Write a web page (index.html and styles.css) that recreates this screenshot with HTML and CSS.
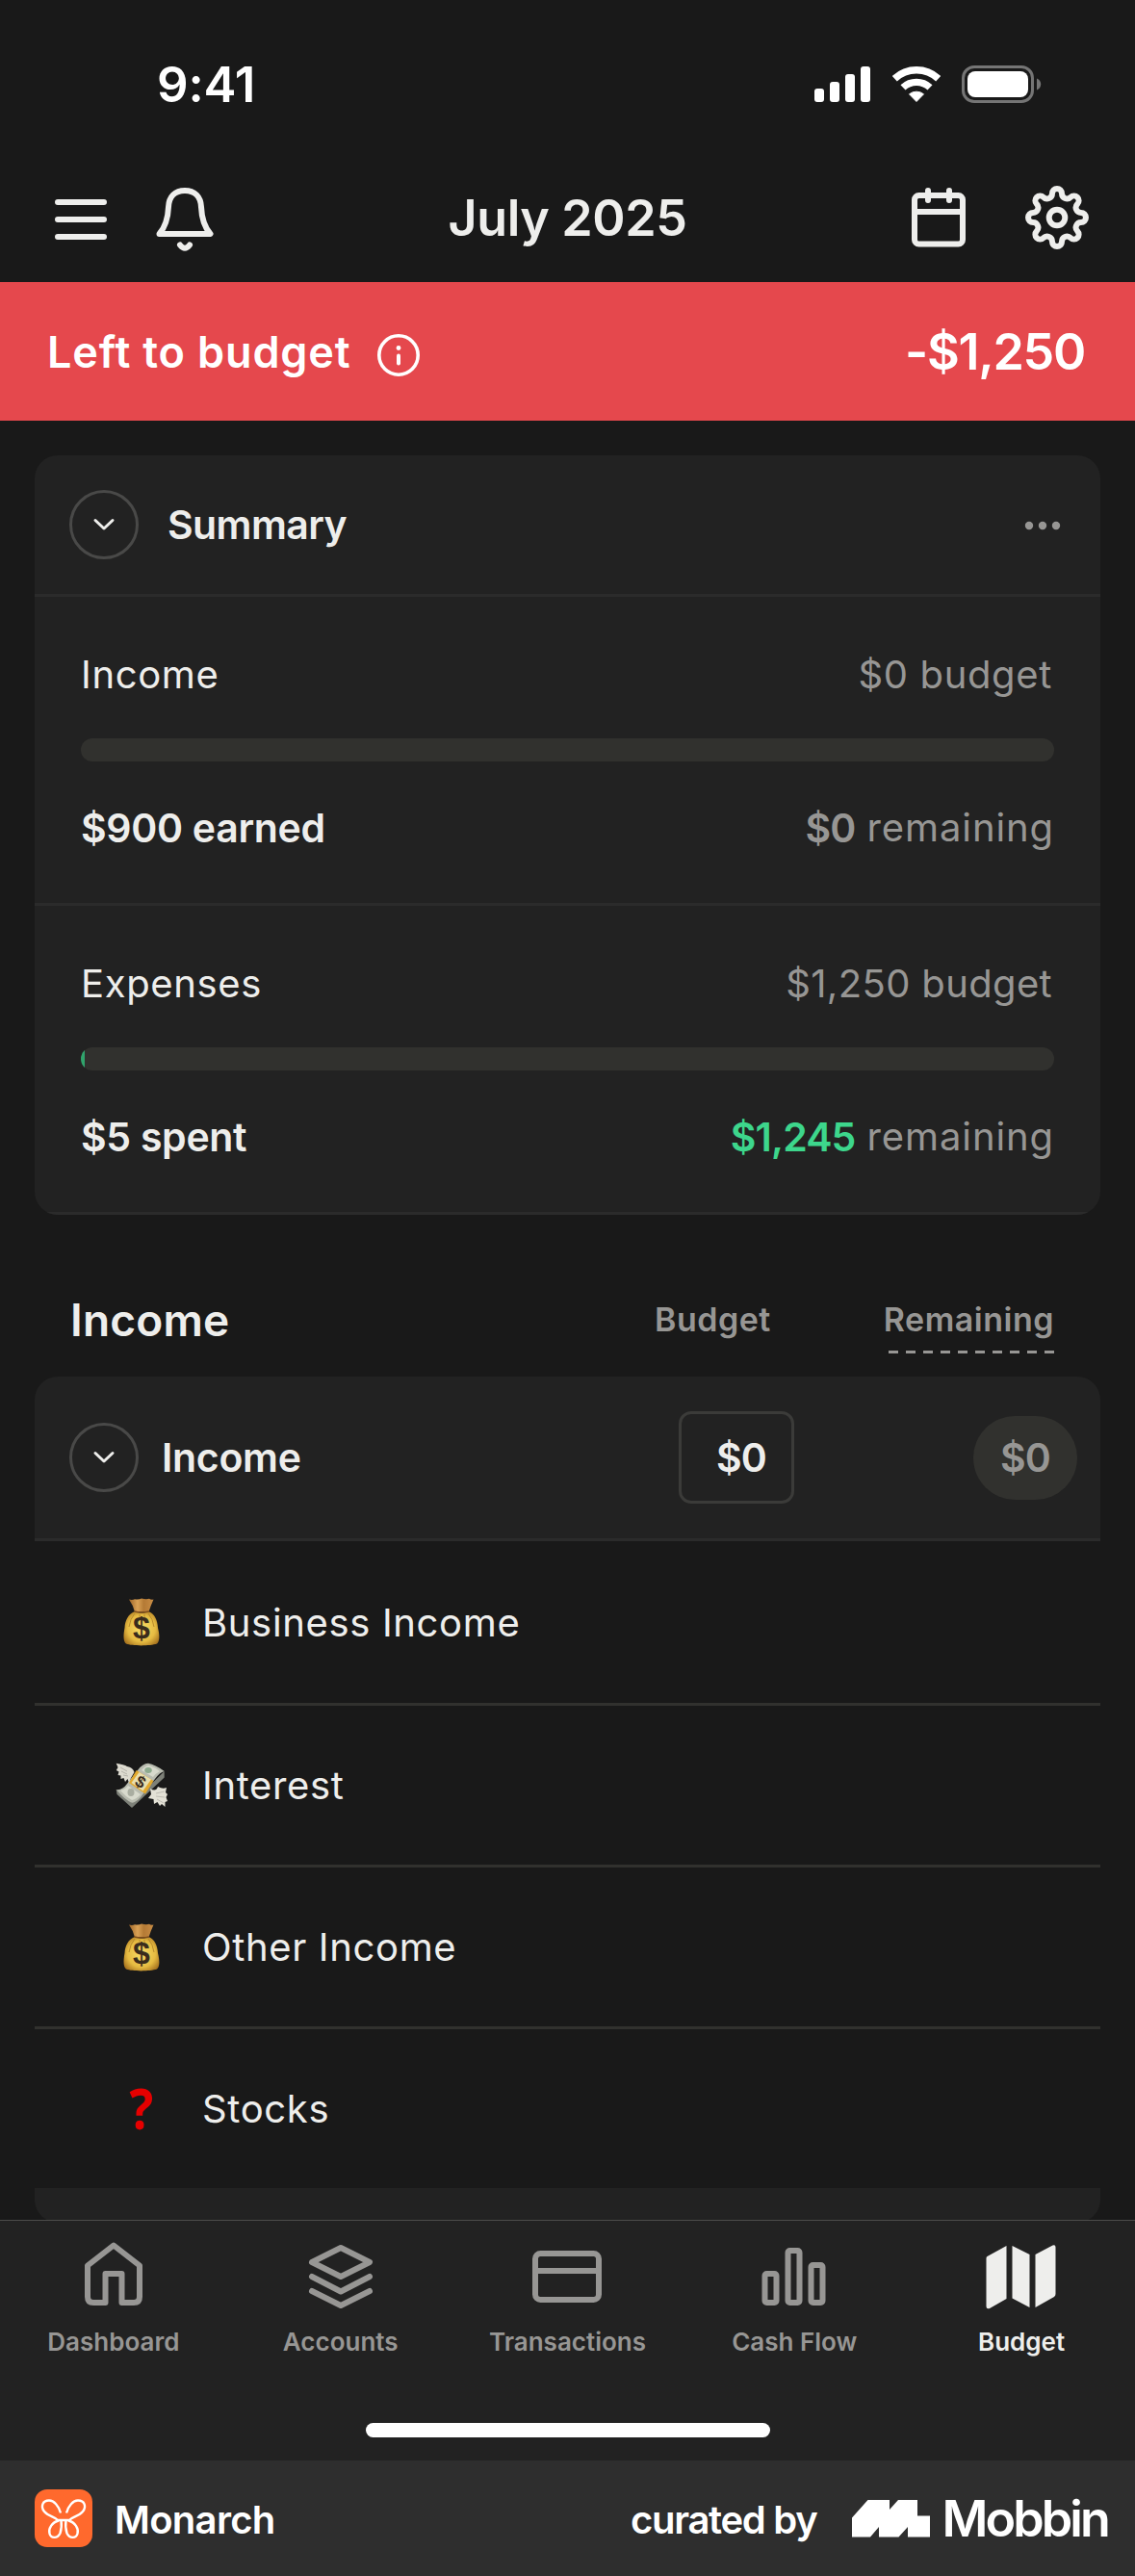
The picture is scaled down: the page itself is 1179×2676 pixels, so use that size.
FILE: index.html
```html
<!DOCTYPE html>
<html lang="en">
<head>
<meta charset="utf-8">
<title>Budget</title>
<link rel="stylesheet" href="styles.css">
</head>
<body>
<div class="app">
  <div class="status">
    <span class="time">9:41</span>
    <div class="status-icons">
      <svg width="58" height="37" viewBox="0 0 58 37" fill="#fff"><rect x="0" y="23" width="10" height="14" rx="3"/><rect x="16" y="16" width="10" height="21" rx="3"/><rect x="32" y="8" width="10" height="29" rx="3"/><rect x="48" y="0" width="10" height="37" rx="3"/></svg>
      <svg class="wifi" width="50" height="37" viewBox="0 0 50 37" fill="none" stroke="#fff" stroke-width="7.4"><path d="M2.3 12.7A33.3 33.3 0 0 1 47.7 12.7"/><path d="M11 21.9A20.6 20.6 0 0 1 39 21.9"/><path d="M25 36.500L17.500 28.800A12 12 0 0 1 32.500 28.800Z" fill="#fff" stroke="#fff" stroke-width="1" stroke-linejoin="round"/></svg>
      <svg width="83" height="39" viewBox="0 0 83 39"><rect x="1.500" y="1.500" width="72" height="36" rx="11.500" fill="none" stroke="#757575" stroke-width="3"/><rect x="6" y="6" width="63" height="27" rx="8" fill="#fff"/><path d="M78 13.500C80.500 14.500 82.200 16.800 82.200 19.500S80.500 24.500 78 25.500Z" fill="#757575"/></svg>
    </div>
  </div>

  <header class="topbar">
    <div class="topbar-left">
      <svg class="icon menu" width="54" height="42" viewBox="0 0 54 42"><path d="M3 3H51M3 21H51M3 39H51"/></svg>
      <svg class="icon bell" width="60" height="66" viewBox="0 0 60 66"><path d="M3.500 48C9.500 41 12.500 32 13 20C13.500 9 20 3 30 3C40 3 46.500 9 47 20C47.500 32 50.500 41 56.500 48Z"/><path d="M25 59.500Q30 66 35 59.500"/></svg>
    </div>
    <h1 class="title">July 2025</h1>
    <div class="topbar-right">
      <svg class="icon" width="56" height="62" viewBox="0 0 56 62"><rect x="3" y="8" width="50" height="50.500" rx="4.500"/><path d="M3 25H53M17 3V13M39 3V13"/></svg>
      <svg class="icon" width="66" height="66" viewBox="-33 -33 66 66"><path d="M-5 -24.970A5 5 0 0 1 5 -24.970A5.330 5.330 0 0 0 14.120 -21.190A5 5 0 0 1 21.190 -14.120A5.330 5.330 0 0 0 24.970 -5A5 5 0 0 1 24.970 5A5.330 5.330 0 0 0 21.190 14.120A5 5 0 0 1 14.120 21.190A5.330 5.330 0 0 0 5 24.970A5 5 0 0 1 -5 24.970A5.330 5.330 0 0 0 -14.120 21.190A5 5 0 0 1 -21.190 14.120A5.330 5.330 0 0 0 -24.970 5A5 5 0 0 1 -24.970 -5A5.330 5.330 0 0 0 -21.190 -14.120A5 5 0 0 1 -14.120 -21.190A5.330 5.330 0 0 0 -5 -24.970Z"/><circle r="8.300"/></svg>
    </div>
  </header>

  <div class="banner">
    <div class="banner-label">
      <span class="banner-text">Left to budget</span>
      <svg class="info" width="44" height="44" viewBox="0 0 44 44" fill="none" stroke="#fff" stroke-linecap="round"><circle cx="22" cy="22" r="20.200" stroke-width="3.600"/><path d="M22 22.500V30.500" stroke-width="4"/><circle cx="22" cy="14.500" r="2.400" fill="#fff" stroke="none"/></svg>
    </div>
    <span class="banner-amount">-$1,250</span>
  </div>

  <main class="content">
    <section class="card">
      <div class="card-head">
        <span class="toggle"><svg width="24" height="14" viewBox="0 0 24 14"><path d="M3 2.500L12 11L21 2.500"/></svg></span>
        <h2 class="card-title">Summary</h2>
        <svg class="dots" width="38" height="10" viewBox="0 0 38 10" fill="#979694"><circle cx="5" cy="5" r="4.200"/><circle cx="19" cy="5" r="4.200"/><circle cx="33" cy="5" r="4.200"/></svg>
      </div>
      <div class="stat">
        <div class="line"><span class="body">Income</span><span class="body muted">$0 budget</span></div>
        <div class="bar"></div>
        <div class="line"><span class="strong">$900 earned</span><span class="remain"><span class="strong num muted">$0</span> <span class="body muted">remaining</span></span></div>
      </div>
      <div class="stat">
        <div class="line"><span class="body">Expenses</span><span class="body muted wide">$1,250 budget</span></div>
        <div class="bar"><div class="fill" style="width:0.4%"></div></div>
        <div class="line"><span class="strong">$5 spent</span><span class="remain"><span class="strong num green">$1,245</span> <span class="body muted">remaining</span></span></div>
      </div>
    </section>

    <div class="list-head">
      <h2 class="list-title">Income</h2>
      <span class="col">Budget</span>
      <span class="col dashed">Remaining</span>
    </div>

    <section class="group">
      <div class="group-head">
        <span class="toggle"><svg width="24" height="14" viewBox="0 0 24 14"><path d="M3 2.500L12 11L21 2.500"/></svg></span>
        <h3 class="group-title">Income</h3>
        <span class="amount-box strong num">$0</span>
        <span class="pill strong num muted">$0</span>
      </div>
      <div class="row first">
        <span class="emoji"><svg width="38" height="50" viewBox="0 0 38 50">
          <defs>
            <radialGradient id="bag" cx=".5" cy=".5" r=".6"><stop offset="0" stop-color="#f9de68"/><stop offset=".65" stop-color="#e6bb42"/><stop offset="1" stop-color="#a8741f"/></radialGradient>
            <linearGradient id="neck"><stop offset="0" stop-color="#9c6428"/><stop offset=".35" stop-color="#dba255"/><stop offset=".6" stop-color="#b47a35"/><stop offset="1" stop-color="#c98d45"/></linearGradient>
            <g id="moneybag"><path d="M6 1.500Q9.500 2.500 12 1.200Q16 2 19 .6Q24 1.800 27 .8Q29 2 31.500 1.500Q28.500 8 26.500 14.500H12Q10 7 6 1.500Z" fill="url(#neck)"/><path d="M12 14C19 16 20 16 26.500 14C33 17 35.500 23 36 31C38 39 38 45 35 47.500C28 50 9 50 3 47.500C0 45 0 39 1.500 31C2 23 5 17 12 14Z" fill="url(#bag)"/><path d="M12 16Q7 22 6 30M26 16Q31 22 32 30M17 17V22M22 17V22" stroke="#b88a2c" stroke-width="1" fill="none"/><path d="M11.500 14Q19 16 27 14" stroke="#7c4c1c" stroke-width="1.500" fill="none"/><text x="19" y="42" class="dollar">$</text></g>
          </defs>
          <use href="#moneybag"/></svg></span>
        <span class="body">Business Income</span>
      </div>
      <div class="row">
        <span class="emoji"><svg width="54" height="48" viewBox="0 0 54 48">
          <path d="M.7 28L17 42V47L1.500 33ZM17 42L50.700 9V15.500L17 47Z" fill="#7d8078"/>
          <path d="M.7 28Q7 29 12 22L23 8Q28 1 34 .8Q41 2 50.700 9Q46 10 41 17L29 32Q24 40 17 42Q9 38 .7 28Z" fill="#b9bcb0"/>
          <path d="M5 29Q10 28 13 24L26 33Q22 38 17 39Q10 35 5 29ZM27 8Q31 3 35 3Q41 5 46 9Q42 11 39 15Z" fill="#d8dacd"/>
          <ellipse cx="16" cy="31" rx="3.500" ry="4" fill="#a9ada0"/><ellipse cx="34" cy="8" rx="3.800" ry="3" fill="#8eab8e"/>
          <path d="M21.700 8L39.500 19L31 32.500L14 21Z" fill="#e2a92e"/><path d="M24.500 10L37 17.500L28.500 29.500L16.500 21Z" fill="#e9dfae"/>
          <text x="0" y="6" transform="translate(26 20) rotate(30)" class="dollar small">$</text>
          <path d="M.7 .8Q9 2 12 4Q18 5 19.500 10L16 16L14 21L12.500 17L10 20L8.500 16L5.500 17L5.500 13.500L2.500 13L3.500 9.500L.8 8L2.500 5Z" fill="#dddbd0"/><path d="M5 5L12 9M6 9L12 12M8 13L13 14" stroke="#aaa89f" stroke-width=".8"/>
          <path d="M36 27Q42 31 44 25Q49 28 53 26L52 31L54 33L52.500 36L54 40L51.500 41L51.500 46L48 43L46 45L43.500 41L40 43L39.500 38L34 37L37 33Z" fill="#e3e1d6"/><path d="M42 32L51 30M42 35L51 36M43 38L50 42" stroke="#b5b3a9" stroke-width=".8"/>
        </svg></span>
        <span class="body">Interest</span>
      </div>
      <div class="row">
        <span class="emoji"><svg width="38" height="50" viewBox="0 0 38 50"><use href="#moneybag"/></svg></span>
        <span class="body">Other Income</span>
      </div>
      <div class="row last">
        <span class="emoji question">?</span>
        <span class="body">Stocks</span>
      </div>
      <div class="group-foot"></div>
    </section>
  </main>

  <nav class="tabs">
    <div class="tab-row">
      <div class="tab"><svg class="tab-icon" viewBox="0 0 84 84"><path d="M42 10.500L15 31.500V64Q15 70 21 70H33.500V40H50.500V70H63Q69 70 69 64V31.500Z"/></svg><span>Dashboard</span></div>
      <div class="tab"><svg class="tab-icon" viewBox="0 0 84 84"><path d="M42 13L72 28L42 43L12 28ZM12 43L42 58.500L72 43M12 58L42 73L72 58"/></svg><span>Accounts</span></div>
      <div class="tab"><svg class="tab-icon" viewBox="0 0 84 84"><rect x="9" y="19" width="66" height="48" rx="5.500"/><path d="M9 37H75"/></svg><span>Transactions</span></div>
      <div class="tab"><svg class="tab-icon" viewBox="0 0 84 84"><rect x="11.500" y="40" width="12" height="30" rx="2"/><rect x="35.500" y="16" width="12" height="54" rx="2"/><rect x="59.500" y="31" width="12" height="39" rx="2"/></svg><span>Cash Flow</span></div>
      <div class="tab active"><svg class="tab-icon solid" viewBox="0 0 84 84"><path d="M6.500 22L26.500 11V66L9 76Q5.500 77 5.500 74V24Q5.500 22.500 6.500 22ZM32.500 11L50.500 20V75L32.500 65.500ZM56.500 20L74.500 10.500Q77.500 9.500 77.500 12.500V61Q77.500 63 76 64L56.500 75Z"/></svg><span>Budget</span></div>
    </div>
    <div class="home-indicator"></div>
  </nav>

  <footer class="credit">
    <svg width="60" height="60" viewBox="0 0 60 60"><rect width="60" height="60" rx="13" fill="#ff692d"/><path d="M27 24.500C25 17 20 11.500 15 11.500C8 11.500 6 18 10 23C14 28 21 28.500 24 32H36C39 28.500 46 28 50 23C54 18 52 11.500 45 11.500C40 11.500 35 17 33 24.500M25 32.500C18 34 14 41 15.500 46C17 51.500 24 51 26.500 45.500C28 41 28 36 27.500 32M35 32.500C42 34 46 41 44.500 46C43 51.500 36 51 33.500 45.500C32 41 32 36 32.500 32" fill="none" stroke="#fff" stroke-width="2.400"/></svg>
    <span class="brand">Monarch</span>
    <span class="curated">curated by</span>
    <svg width="81" height="39" viewBox="0 0 81 39" fill="#fff"><path d="M0 18.500L16.500 0H39V10L48 0H68V16.500H81V38.500H58V28L48.500 38.500H28V28L19 38.500H0Z"/></svg>
    <span class="mobbin">Mobbin</span>
  </footer>
</div>
</body>
</html>
```
FILE: styles.css
```css
* { box-sizing: border-box; }

body {
  margin: 0;
  background: #191919;
  color: #eeeeec;
  font-family: Inter, "Liberation Sans", sans-serif;
}

h1, h2, h3 { margin: 0; }

svg { display: block; flex: none; }

.app {
  width: 1179px;
  height: 2676px;
  display: flex;
  flex-direction: column;
  overflow: hidden;
}

/* Status bar */
.status {
  height: 159px;
  padding: 16px 97px 0 163px;
  display: flex;
  align-items: center;
  justify-content: space-between;
  color: #fff;
}

.time { font-size: 51px; font-weight: 600; letter-spacing: -0.2px; }

.status-icons { display: flex; align-items: center; }
.wifi { margin: 0 22px 0 23px; }

/* Top bar */
.topbar {
  height: 134px;
  padding: 0 48px 0 57px;
  display: grid;
  grid-template-columns: 1fr auto 1fr;
  align-items: center;
}

.topbar-left, .topbar-right { display: flex; align-items: center; }
.topbar-left { gap: 51px; }
.topbar-right { gap: 62px; justify-content: flex-end; }

.menu { margin-top: 4px; }
.bell { margin-top: 3px; }

.icon {
  fill: none;
  stroke: #eeeeec;
  stroke-width: 6;
  stroke-linecap: round;
  stroke-linejoin: round;
}

.title { margin-left: -9px; font-size: 52px; font-weight: 560; letter-spacing: -0.4px; }

/* Left to budget */
.banner {
  height: 144px;
  padding: 0 52px 0 49px;
  display: flex;
  align-items: center;
  justify-content: space-between;
  background: #e5484d;
  color: #fff;
}

.banner-label { display: flex; align-items: center; gap: 27px; }
.banner-text { font-size: 45px; font-weight: 600; letter-spacing: 0.85px; }
.info { margin-top: 8px; }
.banner-amount { font-size: 52px; font-weight: 600; letter-spacing: -1.3px; }

.content {
  height: 1869px;
  padding: 36px 36px 0;
  overflow: hidden;
}

/* Summary card */
.card {
  background: #222;
  border-radius: 24px;
  overflow: hidden;
}

.card-head {
  height: 147px;
  padding: 0 41px 0 36px;
  display: flex;
  align-items: center;
  border-bottom: 3px solid #2b2b2b;
}

.dots { margin-top: 2px; }

.toggle {
  width: 72px;
  height: 72px;
  border: 3px solid #494948;
  border-radius: 50%;
  display: flex;
  align-items: center;
  justify-content: center;
}

.toggle svg {
  fill: none;
  stroke: #eeeeec;
  stroke-width: 3;
  stroke-linecap: round;
  stroke-linejoin: round;
}

.card-title {
  flex: 1;
  margin-left: 30px;
  font-size: 41px;
  font-weight: 600;
  letter-spacing: -0.6px;
}

.stat {
  padding: 51px 48px 48px;
  border-bottom: 3px solid #2b2b2b;
}

.line {
  height: 60px;
  line-height: 60px;
  display: flex;
  justify-content: space-between;
}

.remain { display: flex; gap: 12px; }
.remain .body { letter-spacing: 0.9px; }

.body { font-size: 40px; font-weight: 400; letter-spacing: 0.65px; }
.line > .muted { margin-right: 2px; }
.wide { letter-spacing: 0.35px; }
.strong { font-size: 41px; font-weight: 600; letter-spacing: -0.3px; }
.num { letter-spacing: -0.9px; }
.muted { color: #979694; }
.green { color: #3dd68c; }

.bar {
  height: 24px;
  margin: 36px 0 39px;
  border-radius: 12px;
  background: #31312e;
  overflow: hidden;
}

.fill { height: 100%; background: #30a46c; }

/* Column headings */
.list-head {
  height: 168px;
  padding: 49px 48px 0 37px;
  display: flex;
  align-items: center;
}

.list-title { flex: 1; font-size: 46px; font-weight: 600; letter-spacing: 0.2px; }

.col {
  font-size: 34px;
  font-weight: 600;
  line-height: 70px;
  letter-spacing: 0.5px;
  color: #979694;
}

.dashed {
  margin-left: 117px;
  background: repeating-linear-gradient(to left, #979694 0 10px, transparent 10px 18px) right bottom / 172px 3px no-repeat;
}

/* Income group */
.group-head {
  height: 171px;
  padding: 0 24px 0 36px;
  display: flex;
  align-items: center;
  background: #222;
  border-bottom: 3px solid #2b2b2b;
  border-radius: 24px 24px 0 0;
}

.group-title {
  flex: 1;
  margin-left: 24px;
  font-size: 41px;
  font-weight: 600;
  letter-spacing: -0.3px;
}

.amount-box {
  width: 120px;
  height: 96px;
  padding-right: 26px;
  border: 3px solid #3b3b39;
  border-radius: 13px;
  line-height: 90px;
  text-align: right;
}

.pill {
  width: 108px;
  height: 87px;
  margin-left: 186px;
  border-radius: 44px;
  background: #31312e;
  line-height: 87px;
  text-align: center;
}

.row {
  height: 168px;
  display: flex;
  align-items: center;
  border-bottom: 3px solid #31312e;
}

.row.first { height: 171px; }
.row.last { height: 165px; border-bottom: 0; }

.emoji {
  width: 72px;
  margin: 0 27px 0 75px;
  display: flex;
  justify-content: center;
}

.question {
  padding-bottom: 3px;
  font-family: "Open Sans", sans-serif;
  font-weight: 700;
  font-size: 59px;
  line-height: 60px;
  color: #e60000;
  transform: scaleX(0.88);
}

.dollar {
  font: 700 32px "Liberation Sans", Arial, sans-serif;
  fill: #3a2c1c;
  text-anchor: middle;
}

.dollar.small { font-size: 17px; }

.group-foot {
  height: 36px;
  background: #222;
  border-radius: 0 0 24px 24px;
}

/* Tab bar */
.tabs {
  height: 250px;
  background: #222;
  border-top: 1px solid #4b4b4a;
}

.tab-row {
  padding-top: 15px;
  display: grid;
  grid-template-columns: repeat(5, 1fr);
}

.tab {
  display: flex;
  flex-direction: column;
  align-items: center;
  gap: 9px;
  color: #979694;
  font-size: 26px;
  font-weight: 600;
  line-height: 36px;
}

.tab.active { color: #eeeeec; }

.tab-icon {
  width: 84px;
  height: 84px;
  fill: none;
  stroke: currentColor;
  stroke-width: 6;
  stroke-linecap: round;
  stroke-linejoin: round;
}

.tab-icon.solid { fill: currentColor; stroke: none; }

.home-indicator {
  width: 420px;
  height: 15px;
  margin: 66px auto 0;
  border-radius: 8px;
  background: #fff;
}

/* Credit strip */
.credit {
  height: 120px;
  padding: 0 28px 0 36px;
  display: flex;
  align-items: center;
  background: #2e2e2e;
  color: #fff;
}

.brand {
  flex: 1;
  margin-left: 23px;
  padding-top: 3px;
  font-size: 40px;
  font-weight: 570;
  letter-spacing: -0.7px;
}

.curated {
  margin-right: 37px;
  padding-top: 3px;
  font-size: 40px;
  font-weight: 570;
  letter-spacing: -1.3px;
}

.mobbin { margin-left: 12px; font-size: 52px; font-weight: 600; letter-spacing: -2.9px; }
```
